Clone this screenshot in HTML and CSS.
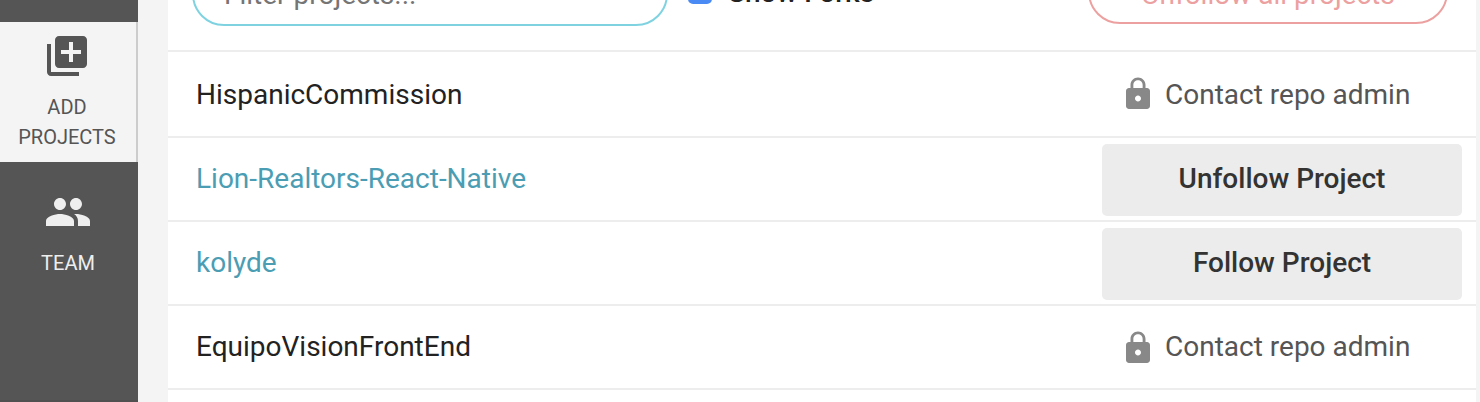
FILE: index.html
```html
<!DOCTYPE html>
<html lang="en">
<head>
<meta charset="utf-8">
<title>Add Projects</title>
<link rel="stylesheet" href="styles.css">
</head>
<body>
<div class="app">
  <nav class="sidebar">
    <a class="nav-item nav-item-active">
      <svg class="nav-icon" viewBox="0 0 24 24"><path d="M4 6H2v14c0 1.1.9 2 2 2h14v-2H4V6zm16-4H8c-1.1 0-2 .9-2 2v12c0 1.1.9 2 2 2h12c1.1 0 2-.9 2-2V4c0-1.1-.9-2-2-2zm-1 9h-4v4h-2v-4H9V9h4V5h2v4h4v2z"/></svg>
      <span class="nav-label">ADD<br>PROJECTS</span>
    </a>
    <a class="nav-item nav-item-team">
      <svg class="nav-icon" viewBox="0 0 24 24"><path d="M16 11c1.66 0 2.99-1.34 2.99-3S17.66 5 16 5c-1.66 0-3 1.34-3 3s1.34 3 3 3zm-8 0c1.66 0 2.99-1.34 2.99-3S9.66 5 8 5C6.34 5 5 6.34 5 8s1.34 3 3 3zm0 2c-2.33 0-7 1.17-7 3.5V19h14v-2.5c0-2.33-4.67-3.5-7-3.5zm8 0c-.29 0-.62.02-.97.05 1.16.84 1.97 1.97 1.97 3.45V19h6v-2.5c0-2.33-4.67-3.5-7-3.5z"/></svg>
      <span class="nav-label">TEAM</span>
    </a>
  </nav>
  <main class="panel">
    <header class="toolbar">
      <div class="filter">Filter projects...</div>
      <span class="checkbox"></span>
      <span class="checkbox-label">Show Forks</span>
      <div class="unfollow-all">Unfollow all projects</div>
    </header>
    <div class="row row-first">
      <span class="name">HispanicCommission</span>
      <span class="contact"><svg class="lock" viewBox="0 0 24 24"><path d="M18 8h-1V6c0-2.76-2.24-5-5-5S7 3.24 7 6v2H6c-1.1 0-2 .9-2 2v10c0 1.1.9 2 2 2h12c1.1 0 2-.9 2-2V10c0-1.1-.9-2-2-2zm-6 9c-1.1 0-2-.9-2-2s.9-2 2-2 2 .9 2 2-.9 2-2 2zm3.1-9H8.9V6c0-1.71 1.39-3.1 3.1-3.1 1.71 0 3.1 1.39 3.1 3.1v2z"/></svg><span class="contact-label">Contact repo admin</span></span>
    </div>
    <div class="row">
      <span class="name name-link">Lion-Realtors-React-Native</span>
      <span class="button">Unfollow Project</span>
    </div>
    <div class="row">
      <span class="name name-link">kolyde</span>
      <span class="button">Follow Project</span>
    </div>
    <div class="row">
      <span class="name">EquipoVisionFrontEnd</span>
      <span class="contact"><svg class="lock" viewBox="0 0 24 24"><path d="M18 8h-1V6c0-2.76-2.24-5-5-5S7 3.24 7 6v2H6c-1.1 0-2 .9-2 2v10c0 1.1.9 2 2 2h12c1.1 0 2-.9 2-2V10c0-1.1-.9-2-2-2zm-6 9c-1.1 0-2-.9-2-2s.9-2 2-2 2 .9 2 2-.9 2-2 2zm3.1-9H8.9V6c0-1.71 1.39-3.1 3.1-3.1 1.71 0 3.1 1.39 3.1 3.1v2z"/></svg><span class="contact-label">Contact repo admin</span></span>
    </div>
    <div class="row row-last"></div>
  </main>
</div>
</body>
</html>
```
FILE: styles.css
```css
* { box-sizing: border-box; }
body {
  margin: 0;
  overflow: hidden;
  background: #f4f4f4;
  color: #222;
  font: 400 28px/40px Roboto, sans-serif;
}
.app { display: flex; height: 402px; overflow: hidden; }
.sidebar {
  width: 138px;
  padding-top: 22px;
  border-bottom: 2px solid #505050;
  background: #555;
  flex: none;
}
.nav-item {
  display: flex;
  flex-direction: column;
  align-items: center;
  color: #eee;
}
.nav-item-active {
  height: 140px;
  padding-top: 10px;
  padding-right: 2px;
  border-right: 2px solid #ccc;
  background: #f4f4f4;
  color: #555;
}
.nav-item-team { padding: 26px 2px 0 0; }
.nav-icon { width: 48px; height: 48px; fill: currentColor; }
.nav-label {
  margin-top: 12px;
  font-size: 20px;
  line-height: 30px;
  text-align: center;
}
.panel {
  width: 1308px;
  margin-left: 30px;
  background: #fff;
}
.toolbar {
  display: flex;
  align-items: flex-end;
  height: 50px;
  padding: 0 28px 24px 24px;
}
.filter, .unfollow-all {
  flex: none;
  height: 64px;
  border: 2px solid #7fd3e1;
  border-radius: 32px;
  line-height: 60px;
}
.filter { width: 476px; padding: 1px 0 0 30px; color: #757575; }
.checkbox {
  width: 24px;
  height: 24px;
  margin: 0 0 22px 20px;
  border-radius: 5px;
  background: #4a8af4;
}
.checkbox-label {
  margin: 0 0 13px 16px;
  font-weight: 500;
  line-height: 40px;
}
.unfollow-all {
  width: 360px;
  margin: 0 0 2px auto;
  padding-top: 3px;
  border-color: #eca0a0;
  color: #eca0a0;
  text-align: center;
}
.row {
  display: flex;
  justify-content: space-between;
  height: 84px;
  padding: 0 14px 0 28px;
  border-top: 2px solid #ededed;
}
.row-first { height: 86px; padding-top: 2px; }
.row-last { height: 14px; }
.name { padding-top: 21px; }
.name-link { color: #4b9db3; }
.contact { display: flex; width: 342px; padding-top: 21px; color: #555; }
.lock { width: 36px; height: 36px; margin-top: 3px; fill: #888; }
.row-first .lock { margin-top: 1px; }
.contact-label { margin-left: 9px; }
.button {
  width: 360px;
  height: 72px;
  margin-top: 6px;
  border-radius: 5px;
  background: #ececec;
  color: #333;
  font-weight: 500;
  line-height: 70px;
  text-align: center;
}
```
